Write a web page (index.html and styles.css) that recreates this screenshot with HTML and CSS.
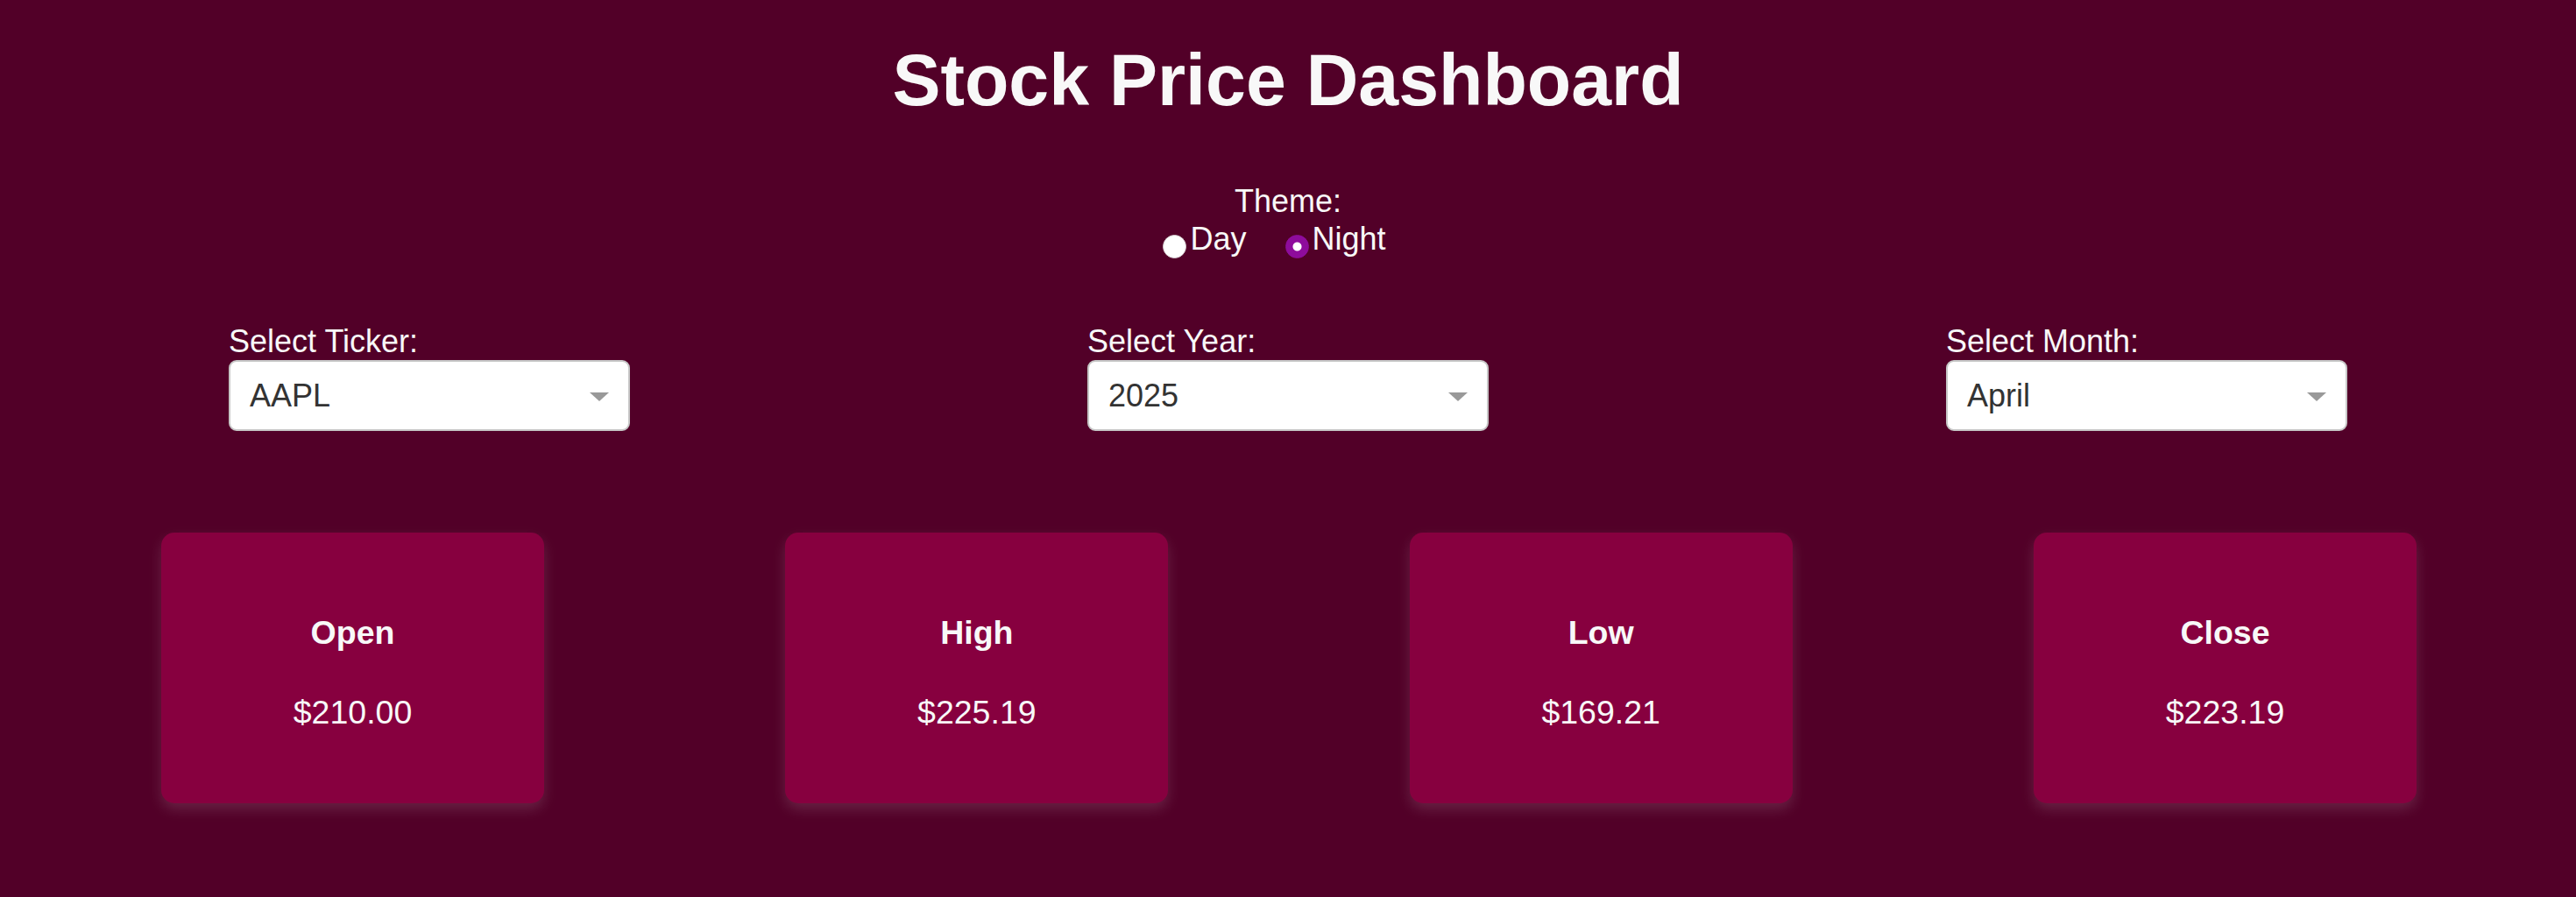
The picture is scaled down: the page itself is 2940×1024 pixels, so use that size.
FILE: index.html
```html
<!DOCTYPE html>
<html lang="en">
<head>
<meta charset="utf-8">
<title>Stock Price Dashboard</title>
<link rel="stylesheet" href="styles.css">
</head>
<body>
<div class="page">
  <h1 class="title">Stock Price Dashboard</h1>

  <div class="theme">
    <div class="theme-label">Theme:</div>
    <div class="theme-options">
      <label class="option"><input type="radio" name="theme" class="radio" value="day">Day</label>
      <label class="option"><input type="radio" name="theme" class="radio" value="night" checked>Night</label>
    </div>
  </div>

  <div class="filters">
    <div class="filter">
      <div class="filter-label">Select Ticker:</div>
      <div class="select">
        <span class="select-value">AAPL</span>
        <span class="select-arrow"></span>
      </div>
    </div>
    <div class="filter">
      <div class="filter-label">Select Year:</div>
      <div class="select">
        <span class="select-value">2025</span>
        <span class="select-arrow"></span>
      </div>
    </div>
    <div class="filter">
      <div class="filter-label">Select Month:</div>
      <div class="select">
        <span class="select-value">April</span>
        <span class="select-arrow"></span>
      </div>
    </div>
  </div>

  <div class="cards">
    <div class="card">
      <div class="card-title">Open</div>
      <div class="card-value">$210.00</div>
    </div>
    <div class="card">
      <div class="card-title">High</div>
      <div class="card-value">$225.19</div>
    </div>
    <div class="card">
      <div class="card-title">Low</div>
      <div class="card-value">$169.21</div>
    </div>
    <div class="card">
      <div class="card-title">Close</div>
      <div class="card-value">$223.19</div>
    </div>
  </div>
</div>
</body>
</html>
```

FILE: styles.css
```css
html, body {
  margin: 0;
  padding: 0;
}

body {
  background: #520028;
  color: #f8f8f8;
  font-family: "Liberation Sans", Arial, Helvetica, sans-serif;
  width: 2940px;
  height: 1024px;
  overflow: hidden;
}

.page {
  display: flex;
  flex-direction: column;
}

.title {
  margin: 0;
  padding-top: 43px;
  font-size: 82.5px;
  line-height: 96px;
  font-weight: 700;
  text-align: center;
  color: #f8f8f8;
}

.theme {
  margin-top: 71px;
  display: flex;
  flex-direction: column;
  align-items: center;
  font-size: 36px;
}

.theme-label {
  line-height: 40px;
  height: 40px;
}

.theme-options {
  display: flex;
  justify-content: center;
  height: 41px;
  margin-top: 2px;
  margin-bottom: -2px;
}

.option {
  display: flex;
  align-items: flex-start;
  line-height: 41px;
  margin-right: 39px;
  color: #f8f8f8;
}

.radio {
  appearance: none;
  -webkit-appearance: none;
  box-sizing: border-box;
  width: 27px;
  height: 27px;
  margin: 16px 4px 0 8px;
  border-radius: 50%;
  background: #ffffff;
  border: 1px solid #d8d0d4;
  flex: none;
}

.radio:checked {
  background: radial-gradient(circle, #ffffff 0, #ffffff 4.5px, #8e0c9c 5.5px);
  border: 1px solid #8e0c9c;
  margin-right: 3px;
  margin-left: 6px;
}

.filters {
  margin-top: 78px;
  display: flex;
  justify-content: space-around;
}

.filter {
  width: 458px;
  display: flex;
  flex-direction: column;
}

.filter-label {
  font-size: 36px;
  line-height: 41px;
  height: 41px;
  margin-bottom: 1px;
  color: #f8f8f8;
}

.select {
  box-sizing: border-box;
  height: 81px;
  background: #ffffff;
  border: 2px solid #c6c6c6;
  border-radius: 9px;
  display: flex;
  align-items: center;
  justify-content: space-between;
  padding: 0 22px 0 22px;
}

.select-value {
  font-size: 36px;
  line-height: 41px;
  color: #333333;
}

.select-arrow {
  width: 0;
  height: 0;
  margin-top: 3px;
  border-left: 11px solid transparent;
  border-right: 11px solid transparent;
  border-top: 10px solid #999999;
}

.cards {
  margin-top: 116px;
  display: flex;
  justify-content: space-between;
  padding: 0 182px 0 184px;
}

.card {
  box-sizing: border-box;
  width: 437px;
  height: 309px;
  background: #87003f;
  border-radius: 15px;
  box-shadow: 0 7px 15px rgba(255, 255, 255, 0.13);
  display: flex;
  flex-direction: column;
  align-items: center;
  padding-top: 93px;
  text-align: center;
}

.card-title {
  font-size: 37.5px;
  line-height: 43px;
  font-weight: 700;
  color: #f8f8f8;
}

.card-value {
  margin-top: 48px;
  font-size: 37.5px;
  line-height: 43px;
  color: #f8f8f8;
}
```
